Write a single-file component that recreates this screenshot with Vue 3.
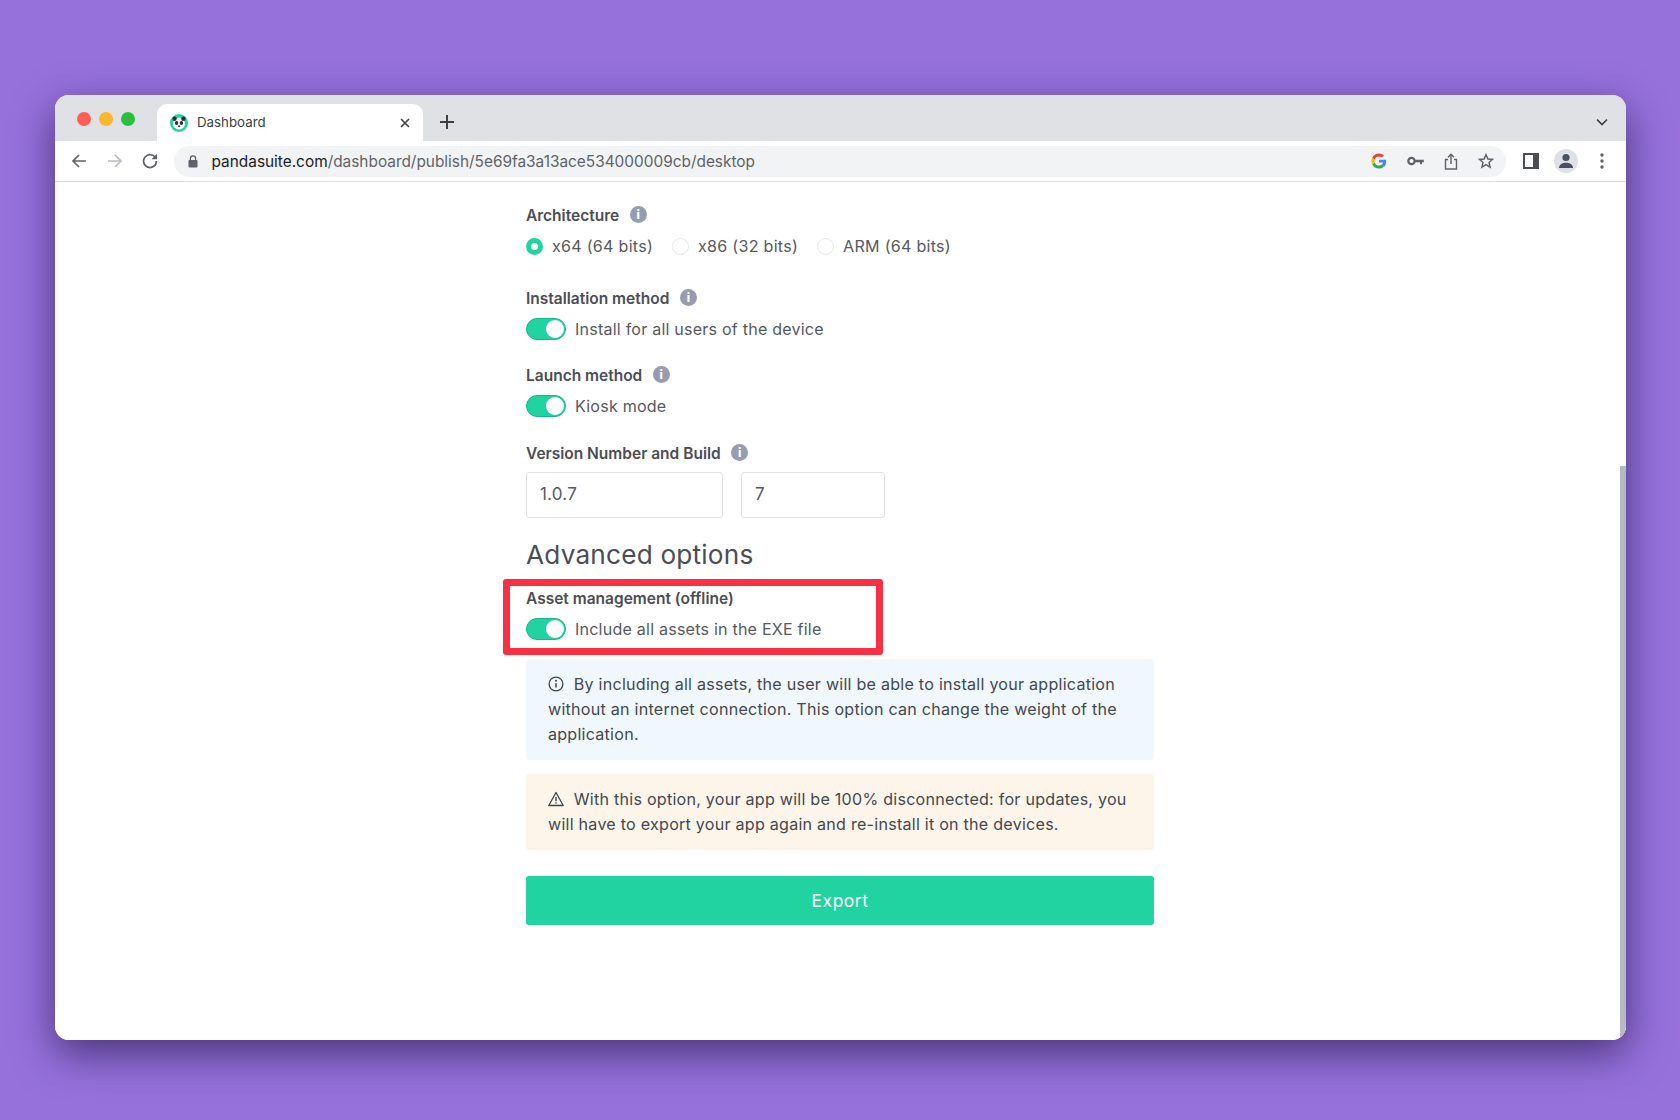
<script setup>
import { ref } from "vue";

const architectures = ref([
  { id: "x64", label: "x64 (64 bits)", checked: true },
  { id: "x86", label: "x86 (32 bits)", checked: false },
  { id: "arm", label: "ARM (64 bits)", checked: false },
]);

const version = ref("1.0.7");
const build = ref("7");
</script>

<template>
  <div class="page">
    <div class="window">
      <div class="tabstrip">
        <div class="lights">
          <span class="light red"></span>
          <span class="light yellow"></span>
          <span class="light green"></span>
        </div>
        <div class="tab">
          <svg class="favicon" width="18" height="18" viewBox="0 0 18 18">
            <circle cx="9" cy="9" r="9" fill="#20d3a1" />
            <circle cx="9" cy="9.6" r="6" fill="#fff" />
            <circle cx="4.6" cy="4.8" r="2.2" fill="#26303a" />
            <circle cx="13.4" cy="4.8" r="2.2" fill="#26303a" />
            <ellipse cx="6.6" cy="9" rx="1.7" ry="2" fill="#26303a" />
            <ellipse cx="11.4" cy="9" rx="1.7" ry="2" fill="#26303a" />
            <circle cx="9" cy="12.3" r="1" fill="#26303a" />
          </svg>
          <span class="tab-title">Dashboard</span>
          <svg width="12" height="12" viewBox="0 0 12 12" class="tab-close">
            <path d="M2 2l8 8M10 2l-8 8" stroke="#3c4043" stroke-width="1.6" fill="none" />
          </svg>
        </div>
        <svg class="new-tab" width="14" height="14" viewBox="0 0 14 14">
          <path d="M7 0v14M0 7h14" stroke="#3c4043" stroke-width="2" fill="none" />
        </svg>
        <svg class="tabs-menu" width="12" height="8" viewBox="0 0 12 8">
          <path d="M1 1.5l5 5 5-5" stroke="#3c4043" stroke-width="1.7" fill="none" />
        </svg>
      </div>

      <div class="toolbar">
        <svg class="nav" width="16" height="16" viewBox="0 0 16 16">
          <path d="M15 8H2M8 2L2 8l6 6" stroke="#5f6368" stroke-width="1.7" fill="none" />
        </svg>
        <svg class="nav" width="16" height="16" viewBox="0 0 16 16">
          <path d="M1 8h13M8 2l6 6-6 6" stroke="#b9bcc1" stroke-width="1.7" fill="none" />
        </svg>
        <svg class="nav" width="16" height="16" viewBox="0 0 16 16">
          <path d="M13.6 5A6.4 6.4 0 1 0 14.4 8" stroke="#5f6368" stroke-width="1.7" fill="none" />
          <path d="M15 0.8v5.4H9.6z" fill="#5f6368" />
        </svg>
        <div class="omnibox">
          <svg class="lock" width="10" height="13" viewBox="0 0 10 13">
            <path d="M2.4 5V3.4a2.6 2.6 0 0 1 5.2 0V5" stroke="#5f6368" stroke-width="1.3" fill="none" />
            <rect x="0.5" y="5" width="9" height="7.5" rx="1" fill="#5f6368" />
          </svg>
          <span class="url"><span class="host">pandasuite.com</span>/dashboard/publish/5e69fa3a13ace534000009cb/desktop</span>
          <div class="omni-icons">
            <svg width="16" height="16" viewBox="0 0 16 16">
              <path d="M15.2 8.2c0-.6-.1-1.1-.2-1.500H8v2.900h4.100a3.500 3.500 0 0 1-1.500 2.300l2.400 1.900c1.400-1.300 2.200-3.300 2.200-5.600z" fill="#4285f4" />
              <path d="M8 15.500c2 0 3.700-.7 5-1.800l-2.400-1.900c-.7.500-1.500.7-2.600.7a4.500 4.500 0 0 1-4.300-3.100L1.200 11.300A7.500 7.500 0 0 0 8 15.500z" fill="#34a853" />
              <path d="M3.700 9.400a4.600 4.600 0 0 1 0-2.800L1.200 4.700a7.500 7.500 0 0 0 0 6.600z" fill="#fbbc05" />
              <path d="M8 3.500c1.100 0 2.100.4 2.900 1.100L13 2.500A7.500 7.500 0 0 0 1.200 4.700l2.500 1.900A4.500 4.500 0 0 1 8 3.500z" fill="#ea4335" />
            </svg>
            <svg width="17" height="10" viewBox="0 0 17 10">
              <circle cx="4.500" cy="5" r="3.200" stroke="#5f6368" stroke-width="2.200" fill="none" />
              <path d="M7.500 3.800h9.300v2.500h-1.800v2h-2v-2H7.500z" fill="#5f6368" />
            </svg>
            <svg width="14" height="17" viewBox="0 0 14 17">
              <path d="M4 6.500H1.500v9.500h11V6.500H10" stroke="#5f6368" stroke-width="1.400" fill="none" />
              <path d="M7 11V1.500M4 4.200L7 1.200l3 3" stroke="#5f6368" stroke-width="1.400" fill="none" />
            </svg>
            <svg width="16" height="16" viewBox="0 0 16 16">
              <path d="M8 1.700l1.900 4.300 4.600.4-3.500 3.100 1.100 4.600L8 11.700l-4.100 2.400L5 9.500 1.500 6.400l4.600-.4z" stroke="#5f6368" stroke-width="1.500" fill="none" />
            </svg>
          </div>
        </div>
        <div class="side-panel"></div>
        <div class="avatar">
          <svg width="18" height="18" viewBox="0 0 18 18">
            <circle cx="9" cy="5.500" r="3.600" fill="#4a5160" />
            <path d="M2 16c0-3.500 3.500-5.200 7-5.200s7 1.700 7 5.200z" fill="#4a5160" />
          </svg>
        </div>
        <svg class="dots" width="4" height="16" viewBox="0 0 4 16">
          <circle cx="2" cy="2" r="1.700" fill="#5f6368" />
          <circle cx="2" cy="8" r="1.700" fill="#5f6368" />
          <circle cx="2" cy="14" r="1.700" fill="#5f6368" />
        </svg>
      </div>

      <div class="content">
        <div class="scrollbar"></div>
        <main class="form">
          <div class="label">
            Architecture
            <span class="info">i</span>
          </div>
          <div class="radios">
            <div class="radio-item" v-for="a in architectures" :key="a.id">
              <span class="radio" :class="{ checked: a.checked }"></span>
              <span>{{ a.label }}</span>
            </div>
          </div>

          <div class="label label-install">
            Installation method
            <span class="info">i</span>
          </div>
          <div class="switch-row">
            <span class="switch"></span>
            <span>Install for all users of the device</span>
          </div>

          <div class="label label-launch">
            Launch method
            <span class="info">i</span>
          </div>
          <div class="switch-row">
            <span class="switch"></span>
            <span>Kiosk mode</span>
          </div>

          <div class="label label-version">
            Version Number and Build
            <span class="info">i</span>
          </div>
          <div class="inputs">
            <input v-model="version" class="input-version" type="text" />
            <input v-model="build" class="input-build" type="text" />
          </div>

          <h2>Advanced options</h2>

          <div class="asset">
            <div class="highlight"></div>
            <div class="label">Asset management (offline)</div>
            <div class="switch-row">
              <span class="switch"></span>
              <span>Include all assets in the EXE file</span>
            </div>
          </div>

          <div class="notice blue">
            <svg class="notice-icon" width="16" height="16" viewBox="0 0 16 16">
              <circle cx="8" cy="8" r="6.900" stroke="#3b4450" stroke-width="1.300" fill="none" />
              <path d="M8 7.200v4.300" stroke="#3b4450" stroke-width="1.500" />
              <circle cx="8" cy="4.800" r="1" fill="#3b4450" />
            </svg>
            By including all assets, the user will be able to install your application without an internet connection. This option can change the weight of the application.
          </div>

          <div class="notice orange">
            <svg class="notice-icon" width="16" height="16" viewBox="0 0 16 16">
              <path d="M8 1.500L15.200 14.500H0.800z" stroke="#3b4450" stroke-width="1.300" fill="none" stroke-linejoin="round" />
              <path d="M8 6v4.300" stroke="#3b4450" stroke-width="1.400" />
              <circle cx="8" cy="12" r=".8" fill="#3b4450" />
            </svg>
            With this option, your app will be 100% disconnected: for updates, you will have to export your app again and re-install it on the devices.
          </div>

          <button class="export">Export</button>
        </main>
      </div>
    </div>
  </div>
</template>

<style>
html,
body {
  margin: 0;
  background: #9671dc;
}
</style>

<style scoped>
* {
  box-sizing: border-box;
}

.page {
  width: 1680px;
  height: 1120px;
  padding: 95px 54px 80px 55px;
  background: #9671dc;
  overflow: hidden;
  font-family: Inter, "Liberation Sans", sans-serif;
}

.window {
  height: 100%;
  display: flex;
  flex-direction: column;
  border-radius: 14px;
  overflow: hidden;
  background: #fff;
  box-shadow: 0 14px 42px rgba(40, 25, 80, 0.7);
}

.tabstrip {
  height: 46px;
  flex: none;
  display: flex;
  align-items: flex-end;
  background: #dfe1e5;
}

.lights {
  display: flex;
  gap: 8px;
  align-self: flex-start;
  margin: 17px 0 0 22px;
}

.light {
  width: 14px;
  height: 14px;
  border-radius: 50%;
}

.red {
  background: #ff5f57;
}

.yellow {
  background: #fdb62d;
}

.green {
  background: #2ac03f;
}

.tab {
  width: 266px;
  height: 37px;
  margin-left: 22px;
  padding: 0 12px 0 13px;
  display: flex;
  align-items: center;
  background: #fff;
  border-radius: 10px 10px 0 0;
}

.tab-title {
  margin-left: 9px;
  padding-bottom: 2px;
  font-size: 13.300px;
  color: #3c4043;
}

.tab-close {
  margin-left: auto;
}

.new-tab {
  align-self: flex-start;
  margin: 20px 0 0 17px;
}

.tabs-menu {
  align-self: flex-start;
  margin: 23px 18px 0 auto;
}

.toolbar {
  height: 41px;
  flex: none;
  display: flex;
  align-items: center;
  padding: 0 0 0 16px;
  background: #fff;
  border-bottom: 1px solid #dadce0;
}

.nav {
  margin-right: 19.500px;
}

.omnibox {
  width: 1332px;
  height: 31px;
  margin-left: -4px;
  padding: 0 12px 0 14px;
  display: flex;
  align-items: center;
  background: #f1f3f4;
  border-radius: 16px;
}

.url {
  margin-left: 14px;
  font-size: 15.400px;
  color: #5f6368;
  white-space: nowrap;
}

.host {
  color: #202124;
}

.omni-icons {
  margin-left: auto;
  display: flex;
  align-items: center;
  gap: 20px;
}

.side-panel {
  width: 16px;
  height: 16px;
  margin-left: 17px;
  border: 2.500px solid #4a4d52;
  border-right-width: 6px;
  background: #fff;
}

.avatar {
  width: 24px;
  height: 24px;
  margin-left: 15px;
  display: flex;
  align-items: center;
  justify-content: center;
  border-radius: 50%;
  background: #dfe1e5;
}

.dots {
  margin-left: 22px;
}

.content {
  position: relative;
  flex: 1;
  overflow: hidden;
  background: #fff;
}

.scrollbar {
  position: absolute;
  top: 284px;
  right: 0;
  bottom: 0;
  width: 6px;
  background: #b5b9c4;
}

.form {
  width: 628px;
  margin-left: 471px;
  padding-top: 23px;
  font-size: 16.100px;
  letter-spacing: 0.200px;
  color: #56595f;
}

.label {
  display: flex;
  align-items: center;
  height: 20px;
  font-size: 15.500px;
  font-weight: 600;
  color: #4a4d55;
  letter-spacing: 0;
}

.info {
  width: 17px;
  height: 17px;
  margin: -2px 0 0 10.500px;
  display: flex;
  align-items: center;
  justify-content: center;
  border-radius: 50%;
  background: #979cae;
  color: #fff;
  font-size: 12px;
  font-weight: 800;
}

.radios {
  display: flex;
  align-items: center;
  gap: 19px;
  height: 24px;
  margin-top: 9px;
  letter-spacing: 0.260px;
}

.radio-item {
  display: flex;
  align-items: center;
  gap: 9px;
}

.radio {
  width: 17px;
  height: 17px;
  border: 1px solid #e4e6ea;
  border-radius: 50%;
  background: #fff;
}

.radio.checked {
  border: 5px solid #20d3a1;
}

.label-install {
  margin-top: 30px;
}

.label-launch {
  margin-top: 24px;
}

.label-version {
  margin-top: 25px;
}

.switch-row {
  display: flex;
  align-items: center;
  gap: 9px;
  height: 24px;
  margin-top: 9px;
}

.switch {
  position: relative;
  width: 40px;
  height: 22px;
  border-radius: 11px;
  background: #20d3a1;
  border: 1px solid #19b68a;
}

.switch::after {
  content: "";
  position: absolute;
  top: 1px;
  right: 1px;
  width: 18px;
  height: 18px;
  border-radius: 50%;
  background: #fff;
}

.inputs {
  display: flex;
  gap: 18px;
  margin-top: 9px;
}

input {
  height: 46px;
  padding: 0 13px 2px;
  border: 1px solid #e0e2e6;
  border-radius: 3px;
  outline: none;
  background: #fff;
  font: inherit;
  font-size: 17px;
  letter-spacing: inherit;
  color: #56595f;
}

.input-version {
  width: 197px;
}

.input-build {
  width: 144px;
}

h2 {
  margin: 18px 0 0;
  height: 37px;
  line-height: 37px;
  font-size: 26.200px;
  font-weight: 400;
  color: #4a4d55;
}

.asset {
  position: relative;
  margin-top: 15px;
  height: 70px;
}

.highlight {
  position: absolute;
  top: -9px;
  left: -23px;
  width: 380px;
  height: 76px;
  border: 7px solid #f93043;
  border-radius: 3px;
}

.notice {
  padding: 13px 18px 13px 22px;
  border-radius: 3px;
  line-height: 25px;
  font-size: 16.100px;
  letter-spacing: 0.240px;
  color: #44484f;
}

.notice-icon {
  vertical-align: -2px;
  margin-right: 5px;
}

.blue {
  margin-top: 1px;
  background: #f0f7fd;
}

.orange {
  margin-top: 14px;
  background: #fdf5ea;
}

.export {
  display: block;
  width: 100%;
  height: 49px;
  margin-top: 26px;
  border: none;
  border-radius: 3px;
  background: #20d3a1;
  color: #fff;
  font: inherit;
  font-size: 17.500px;
  letter-spacing: 0.500px;
}
</style>
